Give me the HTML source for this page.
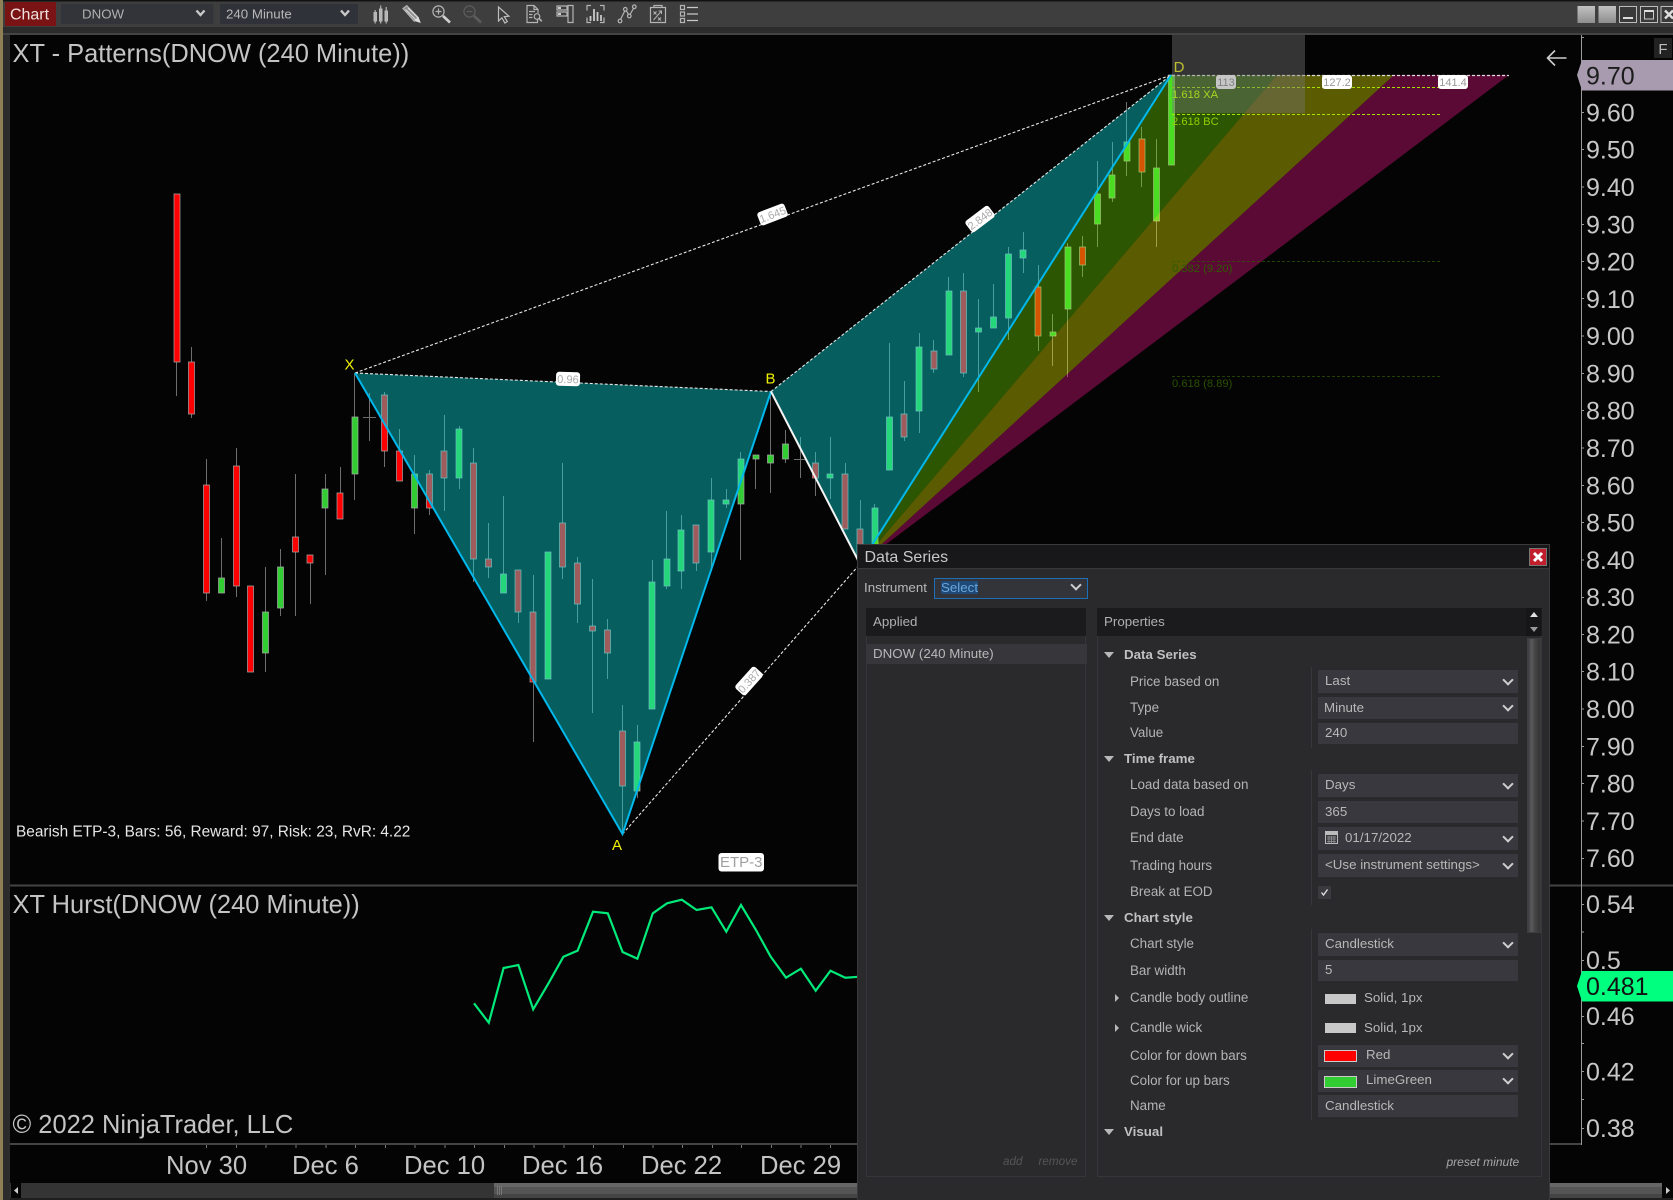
<!DOCTYPE html>
<html><head><meta charset="utf-8"><title>Chart</title>
<style>
html,body{margin:0;padding:0;background:#000}
body{width:1673px;height:1200px;position:relative;overflow:hidden;font-family:"Liberation Sans",sans-serif;color:#bdbdbd;filter:blur(.3px)}
.a{position:absolute;white-space:nowrap}
svg text{font-family:"Liberation Sans",sans-serif}
.l{position:absolute;left:1130px;font-size:13.4px;line-height:16px;color:#b4b4b4;white-space:nowrap}
.h{position:absolute;left:1124px;font-size:13.33px;line-height:16px;font-weight:bold;color:#c0c0c0;white-space:nowrap}
.t{position:absolute;left:1104px;width:0;height:0;border-left:5px solid transparent;border-right:5px solid transparent;border-top:6px solid #b8b8b8}
.r{position:absolute;left:1114.500px;width:0;height:0;border-top:4px solid transparent;border-bottom:4px solid transparent;border-left:4px solid #b8b8b8}
.b{position:absolute;left:1317.5px;width:200px;background:#38383e;font-size:13.33px;color:#b8b8b8;box-sizing:border-box;padding-left:7.5px;white-space:nowrap}
.c{position:absolute;left:1504px;width:6px;height:6px;border-right:2.4px solid #cfcfcf;border-bottom:2.4px solid #cfcfcf;transform:rotate(45deg)}
.sw{position:absolute;left:1324.5px;width:31px;background:#c8c8c8}
.v{position:absolute;left:1311px;width:1px;background:#38383c}
</style></head><body>

<!-- chart + axes -->
<svg class="a" style="left:0;top:0" width="1673" height="1200" viewBox="0 0 1673 1200">
<rect width="1673" height="1200" fill="#040404"/>
<!-- left edge -->
<rect x="0" y="0" width="10" height="1200" fill="#2c2c2c"/>
<rect x="0" y="0" width="3" height="1200" fill="#8f7f55"/>
<!-- toolbar bands -->
<rect x="0" y="0" width="1673" height="27" fill="#3e3e3e"/>
<rect x="0" y="0" width="1673" height="1.5" fill="#111"/>
<rect x="0" y="27" width="1673" height="6" fill="#2c2c2c"/>
<rect x="0" y="33" width="1673" height="2" fill="#444"/>
<rect x="0" y="0" width="3" height="35" fill="#8f7f55"/>

<!-- wicks -->
<path stroke="#6e6e6e" stroke-width="1" fill="none" d="M176.5 194V396M191.5 347V418M206.5 459V601M221.5 538V593M236.5 448V597M265.5 567V672M280.5 549V616M295.5 474V616M310.5 555V604M325.5 474V575M340.5 467V519M354.5 373V500M369.5 393V441M363 417.5H376M384.5 392V467M399.5 429V481M414.5 455V534M429.5 470V515M444.5 415V511M459.5 426V489M473.5 448V582M488.5 523V578M503.5 496V593M518.5 570V623M533.5 575V742M562.5 463V579M577.5 557V623M592.5 579V713M607.5 619V679M622.5 705V834M637.5 725V798M652.5 560V709M666.5 511V589M681.5 515V589M696.5 525V571M711.5 478V567M726.5 489V508M740.5 452V560M755.5 455V489M770.5 391V493M785.5 430V463M800.5 437V478M794 459.5H807M815.5 452V496M830.5 437V499M845.5 463V529M860.5 500V560M874.5 504V560M889.5 343V470M904.5 381V441M919.5 333V433M933.5 340V373M948.5 277V355M963.5 273V377M978.5 299V392M993.5 284V328M1008.5 247V340M1023.5 232V273M1038.5 265V351M1052.5 314V366M1067.5 243V377M1082.5 236V277M1097.5 161V247M1112.5 142V202M1126.5 102V176M1141.5 127V187M1156.5 139V247"/>
<!-- red bodies -->
<path fill="#ff0000" stroke="#a8a8a8" stroke-width=".7" d="M174 194h6V362h-6zM188.5 362h6V414h-6zM203.5 485h6V593h-6zM233.5 466h6V586h-6zM247.5 586h6V672h-6zM292.5 537h6V552h-6zM307 555h6V563h-6zM337 493h6V519h-6zM381.5 395h6V451h-6zM396.5 451h6V481h-6zM426.5 474h6V508h-6zM441 451h6V478h-6zM470.5 463h6V559h-6zM485.5 559h6V567h-6zM515 570h6V612h-6zM530 612h6V682h-6zM559.5 523h6V567h-6zM574.5 563h6V604h-6zM589.5 626h6V631h-6zM604.5 630h6V653h-6zM619.5 731h6V786h-6zM693 525h6V563h-6zM812.5 463h6V478h-6zM842 474h6V529h-6zM857 529h6V560h-6zM901 414h6V437h-6zM931 351h6V369h-6zM960.5 291h6V373h-6zM1035 287h6V336h-6zM1079.5 247h6V265h-6zM1139 139h6V172h-6z"/>
<!-- green bodies -->
<path fill="#32cd32" stroke="#a8a8a8" stroke-width=".7" d="M218.5 578h6V593h-6zM262.5 612h6V653h-6zM277.5 567h6V608h-6zM322 489h6V508h-6zM352 417h6V474h-6zM411.5 474h6V508h-6zM456 429h6V478h-6zM500.5 574h6V593h-6zM545 552h6V679h-6zM634 742h6V791h-6zM649 582h6V709h-6zM664 559h6V586h-6zM678 530h6V571h-6zM708 500h6V552h-6zM723 500h6V504h-6zM738 459h6V504h-6zM753 455h6V459h-6zM767.5 455h6V463h-6zM782.5 444h6V459h-6zM827 474h6V478h-6zM872 508h6V560h-6zM886.5 417h6V470h-6zM916 347h6V411h-6zM946 291h6V355h-6zM975.5 328h6V332h-6zM990.5 317h6V328h-6zM1005.5 254h6V318h-6zM1020 250h6V258h-6zM1050 332h6V336h-6zM1065 247h6V309h-6zM1094.5 194h6V224h-6zM1109 175h6V198h-6zM1124 142h6V161h-6zM1153.5 168h6V221h-6zM1168.5 75h6V165h-6z"/>

<!-- pattern fills -->
<polygon points="355,373 622.5,834 771,391.5" fill="rgb(12,230,230)" fill-opacity=".4"/>
<polygon points="771,391.5 860,564 1171,75" fill="rgb(12,230,230)" fill-opacity=".4"/>
<polygon points="860,564 1171,75 1277,75" fill="rgb(127,255,0)" fill-opacity=".33"/>
<polygon points="860,564 1277,75 1394,75" fill="rgb(255,255,0)" fill-opacity=".35"/>
<polygon points="860,564 1394,75 1509,75" fill="rgb(255,20,147)" fill-opacity=".35"/>

<!-- fib lines -->
<path stroke="#a8e000" stroke-width="1" stroke-dasharray="3 2" fill="none" d="M1172 87.5H1440M1172 114.5H1440"/>
<path stroke="#2f5a00" stroke-opacity=".7" stroke-width="1" stroke-dasharray="3 2" fill="none" d="M1172 261.5H1440M1172 376.5H1440"/>
<path stroke="#ddd" stroke-width="1.3" stroke-dasharray="3 2" fill="none" d="M1172 75.5H1509"/>

<!-- pattern lines -->
<path stroke="#e8e8e8" stroke-width="1.1" stroke-dasharray="3 2" fill="none" d="M355 373L771 391.5M771 391.5L1171 75M355 373L1171 75M622.5 834L860 564"/>
<path stroke="#00b8ec" stroke-width="2" fill="none" d="M355 373L622.5 834L771 391.5M860 564L1171 75"/>
<path stroke="#f4f4f4" stroke-width="2" fill="none" d="M771 391.5L860 564"/>

<!-- line labels -->
<g transform="rotate(1.5 568 379)"><rect x="556" y="372" width="24" height="14" rx="3" fill="#fff"/><text x="568" y="383" font-size="11" fill="#aaa" text-anchor="middle">0.96</text></g>
<g transform="rotate(-21 772.5 214.5)"><rect x="758" y="207.5" width="29" height="14" rx="3" fill="#fff"/><text x="772.5" y="218.5" font-size="11" fill="#aaa" text-anchor="middle">1.645</text></g>
<g transform="rotate(-37 980 219)"><rect x="965.5" y="212" width="29" height="14" rx="3" fill="#fff"/><text x="980" y="223" font-size="11" fill="#aaa" text-anchor="middle">2.848</text></g>
<g transform="rotate(-48 749 681)"><rect x="734.5" y="674" width="29" height="14" rx="3" fill="#fff"/><text x="749" y="685" font-size="11" fill="#aaa" text-anchor="middle">0.387</text></g>
<rect x="718.5" y="853" width="45.5" height="18.5" rx="3" fill="#fff"/>
<text x="741.2" y="867" font-size="15" fill="#a0a0a0" text-anchor="middle">ETP-3</text>

<!-- point labels -->
<g font-size="15" fill="#f0f000" text-anchor="middle">
<text x="349.5" y="369.5">X</text><text x="770.5" y="383.5">B</text><text x="617" y="850">A</text><text x="1179" y="72">D</text>
</g>
<rect x="1216" y="75" width="20" height="14" rx="3" fill="#fff"/><text x="1226" y="86" font-size="11" fill="#888" text-anchor="middle">113</text>
<rect x="1322" y="75" width="30" height="14" rx="3" fill="#fff"/><text x="1337" y="86" font-size="11" fill="#999" text-anchor="middle">127.2</text>
<rect x="1438" y="75" width="30" height="14" rx="3" fill="#fff"/><text x="1453" y="86" font-size="11" fill="#999" text-anchor="middle">141.4</text>
<rect x="1172" y="35" width="133" height="78" fill="rgb(120,120,120)" fill-opacity=".42"/>
<g font-size="11.2">
<text x="1172" y="98" fill="#a4d820">1.618 XA</text>
<text x="1172" y="125" fill="#90d000">2.618 BC</text>
<text x="1172" y="272" fill="#2f5a00">0.382 (9.20)</text>
<text x="1172" y="387" fill="#2a5000">0.618 (8.89)</text>
</g>

<!-- chart titles -->
<g font-size="25.45" fill="#c4c4c4">
<text x="12.5" y="62">XT - Patterns(DNOW (240 Minute))</text>
<text x="12.5" y="913">XT Hurst(DNOW (240 Minute))</text>
<text x="12.5" y="1133">© 2022 NinjaTrader, LLC</text>
</g>
<text x="16" y="836.5" font-size="15.4" fill="#e6e6e6">Bearish ETP-3, Bars: 56, Reward: 97, Risk: 23, RvR: 4.22</text>

<!-- arrow -->
<path d="M1566.5 58H1547.5M1555 50.5L1547.5 58L1555 65.5" stroke="#ccc" stroke-width="1.6" fill="none"/>

<!-- panel dividers -->
<rect x="10" y="884.5" width="1663" height="2" fill="#444"/>
<rect x="10" y="1143" width="1572" height="2" fill="#444"/>
<rect x="1581" y="35" width="1" height="1110" fill="#9a9a9a"/>

<!-- hurst line -->
<polyline fill="none" stroke="#00ea7a" stroke-width="2.2" points="474,1003.3 488.8,1022.7 503.6,968 518.4,965 533.2,1009.3 548.5,983.3 563.4,956.7 577.6,950.7 593,911.7 607.8,913.3 622.6,952 637.4,958.7 652.8,913.3 667,903.3 681.8,899.7 696.6,910 711.5,907.3 726.3,931.7 741,905 756,930 770.7,956.7 786,977.7 800.9,968.7 815.7,990.7 830.5,970.7 845.3,977.7 860,976.7"/>

<!-- price axis ticks -->
<path stroke="#9a9a9a" stroke-width="1" fill="none" d="M1581 37.5h3M1581 75h3M1581 112.5h3M1581 149.5h3M1581 187h3M1581 224.5h3M1581 261.5h3M1581 298.5h3M1581 336h3M1581 373.5h3M1581 410.5h3M1581 448h3M1581 485.5h3M1581 522.5h3M1581 560h3M1581 597.5h3M1581 634.5h3M1581 671.5h3M1581 709h3M1581 746.5h3M1581 783.5h3M1581 821h3M1581 858.5h3M1581 904.5h3M1581 932h3M1581 960.5h3M1581 1016.5h3M1581 1043.5h3M1581 1071.5h3M1581 1099.5h3M1581 1128.5h3"/>

<!-- price labels -->
<g font-size="25" fill="#c8c8c8">
<text x="1586" y="121.5">9.60</text><text x="1586" y="158.5">9.50</text><text x="1586" y="196">9.40</text><text x="1586" y="233.500">9.30</text><text x="1586" y="270.5">9.20</text><text x="1586" y="308">9.10</text><text x="1586" y="345">9.00</text><text x="1586" y="382.5">8.90</text><text x="1586" y="419.5">8.80</text><text x="1586" y="457">8.70</text><text x="1586" y="494.500">8.60</text><text x="1586" y="531.5">8.50</text><text x="1586" y="569">8.40</text><text x="1586" y="606">8.30</text><text x="1586" y="643.5">8.20</text><text x="1586" y="680.5">8.10</text><text x="1586" y="718">8.00</text><text x="1586" y="755.5">7.90</text><text x="1586" y="792.5">7.80</text><text x="1586" y="830">7.70</text><text x="1586" y="867">7.60</text>
<text x="1586" y="913">0.54</text><text x="1586" y="969">0.5</text><text x="1586" y="1025">0.46</text><text x="1586" y="1080.5">0.42</text><text x="1586" y="1137">0.38</text>
</g>
<polygon points="1577,75 1582,60 1673,60 1673,90.5 1582,90.5" fill="#a89bb0"/>
<text x="1586" y="84.5" font-size="25" fill="#1c1c1c">9.70</text>
<polygon points="1577,986 1582,971 1673,971 1673,1001.5 1582,1001.5" fill="#00ff7f"/>
<text x="1586" y="995" font-size="25" fill="#111">0.481</text>
<rect x="1654" y="38" width="18" height="20" fill="#222"/>
<text x="1663" y="54" font-size="15" fill="#bbb" text-anchor="middle">F</text>

<!-- time axis -->
<path stroke="#777" stroke-width="1" fill="none" d="M206.5 1145v3M236.5 1145v3M266 1145v3M296 1145v3M326 1145v3M355.5 1145v3M385.5 1145v3M415 1145v3M445 1145v3M474.5 1145v3M504.5 1145v3M534 1145v3M564 1145v3M593.5 1145v3M623.5 1145v3M653 1145v3M682.5 1145v3M712.5 1145v3M741.5 1145v3M771.5 1145v3M801 1145v3M830.5 1145v3M860 1145v3"/>
<g font-size="25.6" fill="#c4c4c4">
<text x="166" y="1174">Nov 30</text><text x="292" y="1174">Dec 6</text><text x="404" y="1174">Dec 10</text><text x="522" y="1174">Dec 16</text><text x="641" y="1174">Dec 22</text><text x="760" y="1174">Dec 29</text>
</g>

<!-- scrollbar -->
<rect x="10" y="1183" width="1663" height="15" fill="#343434"/>
<rect x="494" y="1183" width="1168" height="15" fill="#555"/>
<rect x="494" y="1183" width="1168" height="4" fill="#666"/>
<rect x="494" y="1194" width="1168" height="4" fill="#444"/>
<rect x="11" y="1183" width="10" height="15" fill="#050505"/>
<polygon points="14,1190.5 18,1187 18,1194" fill="#ccc"/>
<rect x="1662" y="1183" width="11" height="15" fill="#050505"/>
<polygon points="1670,1190.5 1666,1187 1666,1194" fill="#ccc"/>
<path stroke="#777" d="M497.5 1186v9M499.5 1186v9M501.5 1186v9" fill="none"/>
<rect x="10" y="1198" width="1663" height="2" fill="#1e1e1e"/>

<!-- toolbar: chart tab + selects -->
<rect x="5" y="2" width="51" height="24" rx="1" fill="#7a1414"/>
<rect x="61" y="4" width="152.500" height="20" fill="#33343a"/>
<rect x="220" y="4" width="138" height="20" fill="#30323a"/>
<path d="M196.500 10.500l4 4.500 4-4.500M341 10.500l4 4.500 4-4.500" stroke="#c8c8c8" stroke-width="2.400" fill="none"/>
<text x="29.5" y="19.5" font-size="16" fill="#f0e0e0" text-anchor="middle">Chart</text>
<text x="82" y="18.5" font-size="13.3" fill="#b0b0b0">DNOW</text>
<text x="226" y="18.5" font-size="13.3" fill="#b8b8b8">240 Minute</text>

<!-- toolbar icons -->
<g fill="none" stroke="#b4b4b4" stroke-width="1.2">
 <!-- bars -->
 <path fill="#bbb" stroke="none" d="M373.5 12h3.5v9.5h-3.5zM379 8.5h3.5v13h-3.5zM384.5 10.5h3.5v11h-3.5z"/>
 <path d="M375.2 10v13.5M380.7 5.5v18M386.2 7v16.5"/>
 <!-- pencil -->
 <path fill="#8a8a8a" d="M403 8.500l3.800-2.800 11.200 11.600-3.800 3.800z"/>
 <path stroke-width="1" stroke="#ddd" d="M405.500 9.500l10.500 10.500M408 8l10 10"/>
 <path fill="#ddd" stroke="none" d="M414.500 21l4-4 2.300 6z"/>
 <!-- zoom in -->
 <circle cx="438.5" cy="11.5" r="5.6"/><path d="M435.5 11.5h6M438.5 8.5v6"/>
 <path stroke="#d0d0d0" stroke-width="2.6" d="M443 16l7 6.5"/>
 <!-- zoom out -->
 <g stroke="#5c5c5c"><circle cx="469.5" cy="11.5" r="5.6"/><path d="M466.5 11.5h6"/><path stroke-width="2.6" d="M474 16l7 6.5"/></g>
 <!-- cursor -->
 <path stroke="#bdbdbd" d="M498.5 7v14l3.4-3.2 3 5.2 2.4-1.4-3-5 4.6-.4z"/>
 <!-- doc -->
 <path d="M537.5 19v3.5H527V5.5h7l4 4V13M534 5.5v4h4"/>
 <path d="M529 11.5h6M529 14.5h3.5M529 17.5h3.5"/>
 <circle cx="537" cy="16.5" r="2.8"/><path stroke-width="1.6" d="M539 18.5l2.8 2.8"/>
 <!-- fields -->
 <path d="M557 6h10v4h-10zM557 12h10v4h-10zM568 5.5h5v17h-5z"/>
 <path stroke-width="2" stroke="#ccc" d="M558 8h3M558 14h3"/>
 <!-- bracket bars -->
 <path d="M591 5.5h-4v5M600 5.5h4v5M591 22.5h-4v-5M600 22.5h4v-5"/>
 <path stroke="#c8c8c8" stroke-width="1.8" d="M590.5 21v-5M594 21V9M597.5 21V12M601 21v-6"/>
 <!-- polyline nodes -->
 <path d="M620.5 19.5l4.5-9M626 10.5l3 4.5M630 14.5l3.5-6"/>
 <circle cx="620" cy="21" r="1.8"/><circle cx="625.3" cy="9.3" r="1.8"/><circle cx="629.3" cy="16" r="1.8"/><circle cx="634.3" cy="6.8" r="1.8"/>
 <!-- clipboard -->
 <path d="M650.5 7.5h15v15h-15zM654 7.5V5.5h8v2"/>
 <path stroke-width="1" d="M653.5 20l8-9M658.5 11h3v3M653.5 11.5l3 3M656.5 11.5l-3 3M658 17.5l3 3M661 17.5l-3 3"/>
 <!-- list -->
 <path d="M680.5 5.5h4v4h-4zM680.5 12h4v4h-4zM680.5 18.5h4v4h-4z"/>
 <path stroke="#c8c8c8" d="M687 7.5h11M687 14h11M687 20.5h11"/>
</g>

<!-- window buttons -->
<defs><linearGradient id="wb" x1="0" x2="0" y1="0" y2="1"><stop offset="0" stop-color="#c2c2c2"/><stop offset="1" stop-color="#8e8e8e"/></linearGradient></defs>
<rect x="1577.5" y="6" width="17.5" height="17" fill="url(#wb)"/>
<rect x="1598.5" y="6" width="17.5" height="17" fill="url(#wb)"/>
<g fill="#3a3a3a" stroke="#bcbcbc" stroke-width="1">
<rect x="1619.5" y="6.5" width="17" height="16"/><rect x="1640.5" y="6.5" width="17" height="16"/><rect x="1661" y="6.5" width="14" height="16"/>
</g>
<path d="M1623 18h10" stroke="#ddd" stroke-width="2"/>
<path d="M1644.5 10.5h9v8.5h-9z" stroke="#ccc" stroke-width="1" fill="none"/>
<path d="M1644.5 11h9" stroke="#ddd" stroke-width="2"/>
<path d="M1665 10.5l8 8M1673 10.5l-8 8" stroke="#ddd" stroke-width="2.4"/>
</svg>

<!-- dialog -->
<div class="a" style="left:857px;top:544px;width:693px;height:656px;background:#2a2a2d"></div>
<div class="a" style="left:857px;top:544px;width:693px;height:25px;background:#18181a;border-top:1px solid #3a3a3c;border-bottom:1px solid #38383a;box-sizing:border-box"></div>
<div class="a" style="left:857px;top:544px;width:1px;height:656px;background:#3a3a3c"></div>
<div class="a" style="left:1549px;top:544px;width:1px;height:656px;background:#3a3a3c"></div>
<div class="a" style="left:864.5px;top:548px;font-size:16px;line-height:20px;color:#c8c8c8">Data Series</div>
<svg class="a" style="left:1529px;top:548px" width="18" height="18"><rect x=".5" y=".5" width="17" height="17" fill="#c11f2c" stroke="#777"/><path d="M5 5l8 8M13 5l-8 8" stroke="#fff" stroke-width="3"/></svg>

<div class="a" style="left:864px;top:579.5px;font-size:13.33px;line-height:16px;color:#b8b8b8">Instrument</div>
<div class="a" style="left:934px;top:577.5px;width:154px;height:21px;background:#33343a;border:1px solid #1d6fb8;box-sizing:border-box"></div>
<div class="a" style="left:941px;top:581px;width:37px;height:13px;background:#1f4a78;color:#6aa6dc;font-size:13.33px;line-height:13px">Select</div>
<div class="c" style="left:1072px;top:581px"></div>

<!-- applied -->
<div class="a" style="left:866px;top:608px;width:220px;height:569px;border:1px solid #36363a;box-sizing:border-box"></div>
<div class="a" style="left:866px;top:608px;width:220px;height:28px;background:#1b1b1d"></div>
<div class="a" style="left:873px;top:614px;font-size:13.33px;line-height:16px;color:#b0b0b0">Applied</div>
<div class="a" style="left:866px;top:644px;width:221px;height:20px;background:#37373b"></div>
<div class="a" style="left:873px;top:646px;font-size:13.33px;line-height:16px;color:#b8b8b8">DNOW (240 Minute)</div>
<div class="a" style="left:1003px;top:1155px;font-size:11.7px;line-height:14px;font-style:italic;color:#555">add</div>
<div class="a" style="left:1038.5px;top:1155px;font-size:11.7px;line-height:14px;font-style:italic;color:#555">remove</div>

<!-- properties -->
<div class="a" style="left:1097px;top:608px;width:445px;height:569px;border:1px solid #36363a;box-sizing:border-box"></div>
<div class="a" style="left:1097px;top:608px;width:445px;height:28px;background:#1b1b1d"></div>
<div class="a" style="left:1104px;top:614px;font-size:13.33px;line-height:16px;color:#b0b0b0">Properties</div>
<div class="a" style="left:1526px;top:608px;width:15px;height:28px;background:#161618"></div>
<div class="a" style="left:1530px;top:612px;width:0;height:0;border-left:4px solid transparent;border-right:4px solid transparent;border-bottom:5px solid #e0e0e0"></div>
<div class="a" style="left:1530px;top:627px;width:0;height:0;border-left:4px solid transparent;border-right:4px solid transparent;border-top:5px solid #999"></div>
<div class="a" style="left:1527px;top:638px;width:14px;height:295px;background:linear-gradient(90deg,#3c3c3f,#5a5a5c 30%,#444 60%,#333336);border:1px solid #3e3e40;box-sizing:border-box"></div>

<div class="v" style="top:667px;height:81px"></div>
<div class="v" style="top:770px;height:135px"></div>
<div class="v" style="top:929px;height:191px"></div>

<div class="t" style="top:652px"></div><div class="h" style="top:647px">Data Series</div>
<div class="l" style="top:673.5px">Price based on</div>
<div class="b" style="top:670px;height:23px;line-height:22px">Last</div><div class="c" style="top:676px"></div>
<div class="l" style="top:700px">Type</div>
<div class="b" style="top:697px;height:22px;line-height:21px;padding-left:6.5px">Minute</div><div class="c" style="top:702px"></div>
<div class="l" style="top:725px">Value</div>
<div class="b" style="top:723px;height:21px;line-height:20px">240</div>

<div class="t" style="top:756px"></div><div class="h" style="top:750.5px">Time frame</div>
<div class="l" style="top:777px">Load data based on</div>
<div class="b" style="top:774px;height:23px;line-height:22px">Days</div><div class="c" style="top:780px"></div>
<div class="l" style="top:803.5px">Days to load</div>
<div class="b" style="top:801px;height:22px;line-height:21px">365</div>
<div class="l" style="top:830px">End date</div>
<div class="b" style="top:827px;height:23px;line-height:22px;padding-left:27.5px">01/17/2022</div><div class="c" style="top:833px"></div>
<svg class="a" style="left:1325px;top:831px" width="14" height="14"><rect x=".5" y=".5" width="12" height="12" fill="none" stroke="#bbb"/><rect x="1" y="1" width="11" height="3" fill="#bbb"/><path d="M2 6h9M2 8h9M2 10.5h9M4 5v7M6.5 5v7M9 5v7" stroke="#999" stroke-width=".8"/></svg>
<div class="l" style="top:858px">Trading hours</div>
<div class="b" style="top:854px;height:23px;line-height:22px">&lt;Use instrument settings&gt;</div><div class="c" style="top:860px"></div>
<div class="l" style="top:884px">Break at EOD</div>
<svg class="a" style="left:1317.5px;top:886px" width="13" height="13"><rect width="13" height="13" fill="#3a3a3e"/><path d="M3.5 6.5l2 2.5 4-5.5" stroke="#ddd" stroke-width="1.4" fill="none"/></svg>

<div class="t" style="top:915px"></div><div class="h" style="top:909.5px">Chart style</div>
<div class="l" style="top:936px">Chart style</div>
<div class="b" style="top:933px;height:23px;line-height:22px">Candlestick</div><div class="c" style="top:939px"></div>
<div class="l" style="top:962.5px">Bar width</div>
<div class="b" style="top:960px;height:21px;line-height:20.5px">5</div>
<div class="r" style="top:994px"></div><div class="l" style="top:990px">Candle body outline</div>
<div class="sw" style="top:993.5px;height:10px"></div><div class="a" style="left:1364px;top:990px;font-size:13.33px;line-height:16px;color:#b8b8b8">Solid, 1px</div>
<div class="r" style="top:1024px"></div><div class="l" style="top:1020px">Candle wick</div>
<div class="sw" style="top:1023px;height:10px"></div><div class="a" style="left:1364px;top:1020px;font-size:13.33px;line-height:16px;color:#b8b8b8">Solid, 1px</div>
<div class="l" style="top:1047.5px">Color for down bars</div>
<div class="b" style="top:1045px;height:22px;line-height:20.5px;padding-left:48.5px">Red</div><div class="c" style="top:1050px"></div>
<div class="a" style="left:1324px;top:1050px;width:31px;height:10px;background:#ff0000;border:1px solid #ccc"></div>
<div class="l" style="top:1072.5px">Color for up bars</div>
<div class="b" style="top:1070px;height:22px;line-height:20.5px;padding-left:48.5px">LimeGreen</div><div class="c" style="top:1075px"></div>
<div class="a" style="left:1324px;top:1075.5px;width:31px;height:10px;background:#32cd32;border:1px solid #ccc"></div>
<div class="l" style="top:1098px">Name</div>
<div class="b" style="top:1095px;height:22px;line-height:21px">Candlestick</div>
<div class="t" style="top:1129px"></div><div class="h" style="top:1123.5px">Visual</div>
<div class="a" style="left:1446.5px;top:1155px;font-size:12px;line-height:14px;font-style:italic;color:#a8a8a8">preset minute</div>
</body></html>
